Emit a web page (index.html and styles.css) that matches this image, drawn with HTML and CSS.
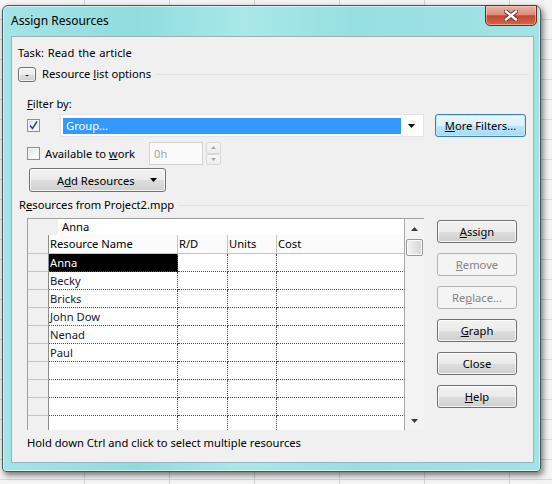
FILE: index.html
```html
<!DOCTYPE html>
<html>
<head>
<meta charset="utf-8">
<title>Assign Resources</title>
<link rel="stylesheet" href="styles.css">
</head>
<body>
<div class="desktop">
  <div class="window">
    <div class="titlebar">
      <span class="title">Assign Resources</span>
      <div class="close-btn">
        <svg width="14" height="11" viewBox="0 0 14 11"><path d="M2 1.5 L12 9.5 M12 1.5 L2 9.5" stroke="#5a2a22" stroke-width="4.2" stroke-linecap="square"/><path d="M2 1.5 L12 9.5 M12 1.5 L2 9.5" stroke="#ffffff" stroke-width="2.4" stroke-linecap="square"/></svg>
      </div>
    </div>
    <div class="client">
      <div class="task">Task: Read the article</div>
      <div class="group-head">
        <span class="mini-btn">-</span>
        <span class="group-label">Resource <u>l</u>ist options</span>
        <span class="group-line"></span>
      </div>
      <div class="filter-label"><u>F</u>ilter by:</div>
      <div class="filter-row">
        <span class="checkbox"><svg width="11" height="11" viewBox="0 0 11 11"><path d="M2 5.5 L4.5 8.5 L9 1.5" fill="none" stroke="#2a3a8c" stroke-width="1.4"/></svg></span>
        <div class="combo">
          <span class="combo-sel">Group...</span>
          <span class="combo-arrow"><svg width="7" height="4" viewBox="0 0 7 4"><path d="M0 0 L7 0 L3.5 4Z" fill="#000"/></svg></span>
        </div>
        <button class="btn focused more"><u>M</u>ore Filters...</button>
      </div>
      <div class="avail-row">
        <span class="checkbox"></span>
        <span class="avail-label">Available to <u>w</u>ork</span>
        <span class="spin-input">0h</span>
        <span class="spin-btns">
          <span class="spin-b"><svg width="5" height="3" viewBox="0 0 5 3"><path d="M0 3 L5 3 L2.5 0Z" fill="#a9a9a9"/></svg></span>
          <span class="spin-b"><svg width="5" height="3" viewBox="0 0 5 3"><path d="M0 0 L5 0 L2.5 3Z" fill="#a9a9a9"/></svg></span>
        </span>
      </div>
      <div class="add-row">
        <button class="btn add">
          <span class="add-text">A<u>d</u>d Resources</span>
          <svg class="add-arrow" width="7" height="4" viewBox="0 0 7 4"><path d="M0 0 L7 0 L3.5 4Z" fill="#000"/></svg>
        </button>
      </div>
      <div class="group-head second">
        <span class="group-label">R<u>e</u>sources from Project2.mpp</span>
        <span class="group-line"></span>
      </div>
      <div class="main">
        <div class="grid-box">
          <div class="table">
            <div class="edit-row"><span class="edit-gutter"></span><span class="edit-field">Anna</span></div>
            <div class="row head">
              <span class="c rh"></span><span class="c name">Resource Name</span><span class="c rd">R/D</span><span class="c units">Units</span><span class="c cost">Cost</span>
            </div>
            <div class="row"><span class="c rh"></span><span class="c name sel">Anna</span><span class="c rd"></span><span class="c units"></span><span class="c cost"></span></div>
            <div class="row"><span class="c rh"></span><span class="c name">Becky</span><span class="c rd"></span><span class="c units"></span><span class="c cost"></span></div>
            <div class="row"><span class="c rh"></span><span class="c name">Bricks</span><span class="c rd"></span><span class="c units"></span><span class="c cost"></span></div>
            <div class="row"><span class="c rh"></span><span class="c name">John Dow</span><span class="c rd"></span><span class="c units"></span><span class="c cost"></span></div>
            <div class="row"><span class="c rh"></span><span class="c name">Nenad</span><span class="c rd"></span><span class="c units"></span><span class="c cost"></span></div>
            <div class="row"><span class="c rh"></span><span class="c name">Paul</span><span class="c rd"></span><span class="c units"></span><span class="c cost"></span></div>
            <div class="row"><span class="c rh"></span><span class="c name"></span><span class="c rd"></span><span class="c units"></span><span class="c cost"></span></div>
            <div class="row"><span class="c rh"></span><span class="c name"></span><span class="c rd"></span><span class="c units"></span><span class="c cost"></span></div>
            <div class="row"><span class="c rh"></span><span class="c name"></span><span class="c rd"></span><span class="c units"></span><span class="c cost"></span></div>
            <div class="row"><span class="c rh"></span><span class="c name"></span><span class="c rd"></span><span class="c units"></span><span class="c cost"></span></div>
          </div>
          <div class="vscroll">
            <span class="sb-arrow"><svg width="7" height="4" viewBox="0 0 7 4"><path d="M0 4 L7 4 L3.5 0Z" fill="#3a3a3a"/></svg></span>
            <span class="sb-thumb"></span>
            <span class="sb-track"></span>
            <span class="sb-arrow down"><svg width="7" height="4" viewBox="0 0 7 4"><path d="M0 0 L7 0 L3.5 4Z" fill="#3a3a3a"/></svg></span>
          </div>
        </div>
        <div class="side-buttons">
          <button class="btn side"><u>A</u>ssign</button>
          <button class="btn side disabled"><u>R</u>emove</button>
          <button class="btn side disabled">Re<u>p</u>lace...</button>
          <button class="btn side"><u>G</u>raph</button>
          <button class="btn side">Close</button>
          <button class="btn side"><u>H</u>elp</button>
        </div>
      </div>
      <div class="hint">Hold down Ctrl and click to select multiple resources</div>
    </div>
  </div>
</div>
</body>
</html>
```

FILE: styles.css
```css
* { box-sizing: border-box; }
html, body { margin: 0; padding: 0; }
body {
  width: 552px;
  height: 484px;
  overflow: hidden;
  font-family: "Noto Sans", "Open Sans", sans-serif;
  font-size: 11.2px;
  color: #000;
}
u { text-decoration: underline; text-underline-offset: 1px; }

.desktop {
  height: 484px;
  padding: 5px 0 0 2px;
  background:
    repeating-linear-gradient(to right, transparent 0 84px, #d2d2d2 84px 85px),
    repeating-linear-gradient(to bottom, transparent 0 19px, #d8d8d8 19px 20px),
    #f4f4f4;
}

.window {
  width: 539px;
  height: 467px;
  border: 1px solid #48585a;
  border-radius: 6px 6px 4px 4px;
  background: linear-gradient(to right, #a4e4e6 0%, #8fdcdf 25%, #a9e8e9 45%, #96dfe1 65%, #a2e3e5 100%);
  box-shadow: 2px 3px 6px rgba(0, 0, 0, 0.55), inset 0 0 0 1px rgba(255, 255, 255, 0.55);
  display: flex;
  flex-direction: column;
  padding: 0 6px 8px 8px;
}

.titlebar {
  height: 30px;
  display: flex;
  justify-content: space-between;
  align-items: flex-start;
}
.title {
  padding-top: 6px;
  font-size: 12px;
  line-height: 17px;
  color: #000;
}
.close-btn {
  width: 52px;
  height: 21px;
  margin-top: -1px;
  margin-right: -3px;
  border: 1px solid #6a2d24;
  border-radius: 0 0 5px 5px;
  background: linear-gradient(#eab2a5 0%, #dd8b7b 45%, #c6452f 52%, #d2664c 100%);
  box-shadow: inset 0 0 0 1px rgba(255, 220, 210, 0.5);
  display: flex;
  align-items: center;
  justify-content: center;
}

.client {
  height: 427px;
  border: 1px solid #9db2b5;
  background: #f0f0f0;
  display: flex;
  flex-direction: column;
}

.task {
  margin-top: 8px;
  padding-left: 6px;
  height: 16px;
  line-height: 16px;
  word-spacing: 1px;
}

.group-head {
  margin-top: 5px;
  height: 16px;
  display: flex;
  align-items: center;
  padding-left: 6px;
  padding-right: 4px;
}
.group-head.second { padding-left: 7px; }
.mini-btn {
  width: 18px;
  height: 15px;
  border: 1px solid #707070;
  border-radius: 3px;
  background: linear-gradient(#f4f4f4 0%, #ebebeb 50%, #dddddd 51%, #cfcfcf 100%);
  box-shadow: inset 0 0 0 1px rgba(255, 255, 255, 0.7);
  display: flex;
  align-items: center;
  justify-content: center;
  line-height: 12px;
  font-size: 11px;
}
.group-label { margin-left: 6px; line-height: 16px; white-space: nowrap; }
.second .group-label { margin-left: 0; }
.group-line {
  flex: 1;
  height: 1px;
  margin-left: 4px;
  background: #dce4e8;
}

.filter-label {
  margin-top: 14px;
  padding-left: 15px;
  height: 16px;
  line-height: 16px;
}

.filter-row, .avail-row {
  height: 23px;
  display: flex;
  align-items: center;
  padding-left: 15px;
}
.filter-row { margin-top: 2px; }
.avail-row { margin-top: 5px; }

.checkbox {
  width: 13px;
  height: 13px;
  border: 1px solid #8e8f8f;
  background: linear-gradient(135deg, #dcdcdc 0%, #f6f6f6 60%, #ffffff 100%);
  box-shadow: inset 0 0 0 1px #f4f4f4;
  display: flex;
  align-items: center;
  justify-content: center;
}

.combo {
  margin-left: 20px;
  width: 364px;
  height: 23px;
  border: 1px solid #e2e3e5;
  background: #fff;
  display: flex;
  align-items: center;
  padding: 2px;
}
.combo-sel {
  width: 338px;
  height: 16px;
  background: #3399ff;
  color: #fff;
  line-height: 16px;
  padding-left: 3px;
}
.combo-arrow {
  flex: 1;
  display: flex;
  justify-content: center;
  align-items: center;
}

.btn {
  font: inherit;
  color: #000;
  height: 23px;
  padding: 0;
  border: 1px solid #707070;
  border-radius: 3px;
  background: linear-gradient(#f2f2f2 0%, #ebebeb 50%, #dddddd 51%, #cfcfcf 100%);
  box-shadow: inset 0 0 0 1px rgba(255, 255, 255, 0.75);
  display: flex;
  align-items: center;
  justify-content: center;
  white-space: nowrap;
}
.btn.focused {
  border-color: #3c7fb1;
  background: linear-gradient(#eaf6fd 0%, #d9f0fc 50%, #bee6fd 51%, #a7d9f5 100%);
  box-shadow: inset 0 0 0 1px #bfe8fb;
}
.btn.disabled {
  border-color: #adb2b5;
  background: #f4f4f4;
  color: #838383;
  box-shadow: none;
}
.more {
  margin-left: 11px;
  width: 91px;
}

.avail-label {
  width: 104px;
  margin-left: 5px;
  line-height: 16px;
}
.spin-input {
  width: 54px;
  height: 23px;
  border: 1px solid #d0d2d4;
  background: #fafafa;
  color: #a6a6a6;
  line-height: 21px;
  padding-left: 4px;
}
.spin-btns {
  margin-left: 3px;
  width: 15px;
  height: 23px;
  display: flex;
  flex-direction: column;
}
.spin-b {
  flex: 1;
  border: 1px solid #d8d8d8;
  border-radius: 2px;
  background: linear-gradient(#f7f7f7, #ededed);
  display: flex;
  align-items: center;
  justify-content: center;
}

.add-row {
  margin-top: 3px;
  height: 24px;
  padding-left: 17px;
}
.btn.add {
  width: 137px;
  height: 24px;
  justify-content: flex-start;
  padding-left: 27px;
}
.add-arrow {
  margin-left: auto;
  margin-right: 8px;
}

.main {
  margin-top: 5px;
  height: 212px;
  display: flex;
  padding-left: 15px;
}
.grid-box {
  width: 397px;
  height: 212px;
  border-top: 1px solid #a0a0a0;
  border-left: 1px solid #a0a0a0;
  display: flex;
  background: #fff;
}
.table {
  width: 377px;
  height: 211px;
  overflow: hidden;
}
.edit-row {
  height: 16px;
  display: flex;
}
.edit-gutter {
  width: 30px;
  background: #f0f0f0;
}
.edit-field {
  flex: 1;
  background: #fff;
  padding-left: 4px;
  line-height: 16px;
  border-right: 1px solid #a8a8a8;
}
.row {
  display: flex;
  height: 18px;
}
.c {
  height: 100%;
  border-right: 1px dotted #4a4a4a;
  border-bottom: 1px dotted #4a4a4a;
  padding-left: 1px;
  line-height: 17px;
  white-space: nowrap;
  overflow: hidden;
  color: #111a33;
}
.c.rh {
  width: 21px;
  background: #f0f0f0;
  border-right: 1px solid #8c8c8c;
  border-bottom: 1px solid #c4c4c4;
}
.c.name { width: 129px; }
.c.rd { width: 50px; }
.c.units { width: 49px; }
.c.cost { width: 128px; border-right: 1px solid #a8a8a8; }
.c.sel { background: #000; color: #fff; }
.row.head { height: 19px; }
.head .c {
  background: #fbfbfb;
  border-right: 1px solid #c5c5c5;
  border-bottom: 1px solid #c5c5c5;
  line-height: 18px;
  color: #000;
}
.head .c.rh { background: #f0f0f0; border-right: 1px solid #8c8c8c; }
.head .c.cost { border-right: 1px solid #a8a8a8; }

.vscroll {
  width: 19px;
  height: 211px;
  background: #f3f3f3;
  display: flex;
  flex-direction: column;
}
.sb-arrow {
  height: 19px;
  display: flex;
  align-items: center;
  justify-content: center;
}
.sb-arrow.down { height: 18px; }
.sb-thumb {
  margin: 1px 0 0 1px;
  width: 17px;
  height: 17px;
  border: 1px solid #979797;
  border-radius: 2px;
  background: linear-gradient(to right, #f3f3f3, #e4e4e4 50%, #d6d6d6);
  box-shadow: inset 0 0 0 1px #fafafa;
}
.sb-track { flex: 1; }

.side-buttons {
  margin-left: 13px;
  padding-top: 2px;
  display: flex;
  flex-direction: column;
  gap: 10px;
}
.btn.side { width: 80px; }

.hint {
  margin-top: 5px;
  padding-left: 15px;
  height: 16px;
  line-height: 16px;
}
```
